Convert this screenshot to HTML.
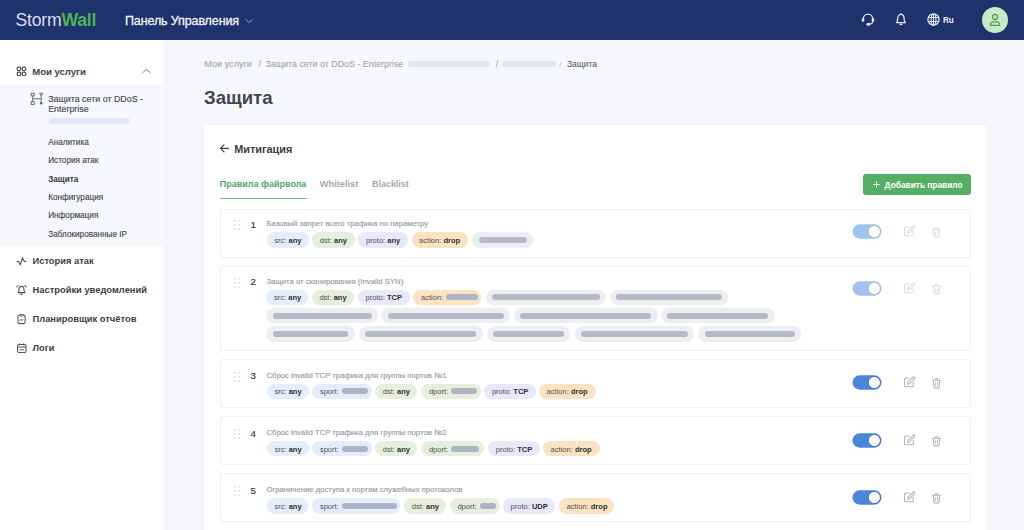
<!DOCTYPE html>
<html lang="ru"><head><meta charset="utf-8"><title>StormWall — Защита</title>
<style>
html,body{margin:0;padding:0;width:1024px;height:530px;overflow:hidden;background:#f5f6fa;}
body{position:relative;font-family:"Liberation Sans", sans-serif;}
.t{position:absolute;white-space:nowrap;line-height:1;}
.t b{font-weight:700;}
.r{position:absolute;}
.s{position:absolute;overflow:visible;}
</style></head><body>
<div class="r" style="left:0.00px;top:0.00px;width:1024.00px;height:40.00px;background:#1e336c;border-radius:0px;"></div>
<div class="t" style="left:15.50px;top:11.70px;font-size:17.6px;font-weight:400;color:#333;letter-spacing:-0.2px;"><span style="font-weight:400;color:#d9dfee">Storm</span><span style="font-weight:700;color:#4db355">Wall</span></div>
<div class="t" style="left:125.00px;top:15.25px;font-size:12.5px;font-weight:400;color:#f2f4fa;letter-spacing:-0.12px;-webkit-text-stroke:0.3px #f2f4fa;">Панель Управления</div>
<svg class="s" style="left:244px;top:17px" width="10" height="8" viewBox="0 0 10 8"><path d="M1.6 2.4 L5 5.6 L8.4 2.4" fill="none" stroke="#8f9bbd" stroke-width="1" stroke-linecap="round" stroke-linejoin="round"/></svg>
<svg class="s" style="left:860px;top:12px" width="16" height="16" viewBox="0 0 16 16">
<path d="M3.4 8.2 V6.8 A4.6 4.6 0 0 1 12.6 6.8 V8.2" fill="none" stroke="#e3e8f3" stroke-width="1.3"/>
<ellipse cx="3" cy="7.9" rx="1.35" ry="1.9" fill="#e3e8f3"/>
<ellipse cx="13" cy="7.9" rx="1.35" ry="1.9" fill="#e3e8f3"/>
<path d="M12.8 9.5 Q12.6 11.8 9.6 12.2" fill="none" stroke="#e3e8f3" stroke-width="1.2"/>
<ellipse cx="8.4" cy="12.3" rx="2" ry="1.5" fill="#e3e8f3"/>
</svg>
<svg class="s" style="left:894px;top:12px" width="14" height="15" viewBox="0 0 14 15">
<path d="M2.5 10.6 C3.5 9.5 3.7 8.6 3.7 6.6 C3.7 4.2 5.1 2.4 6.9 2.4 C8.7 2.4 10.1 4.2 10.1 6.6 C10.1 8.6 10.3 9.5 11.3 10.6 Z" fill="none" stroke="#e3e8f3" stroke-width="1.3" stroke-linejoin="round"/>
<path d="M5.6 11.6 Q6.9 13.6 8.2 11.6" fill="none" stroke="#e3e8f3" stroke-width="1.2"/>
<line x1="6.9" y1="1.3" x2="6.9" y2="2.4" stroke="#e3e8f3" stroke-width="1.1"/>
</svg>
<svg class="s" style="left:926px;top:12px" width="15" height="15" viewBox="0 0 15 15">
<circle cx="7.5" cy="7.5" r="5.6" fill="none" stroke="#e8ecf6" stroke-width="1.2"/>
<ellipse cx="7.5" cy="7.5" rx="2.4" ry="5.6" fill="none" stroke="#e8ecf6" stroke-width="1.05"/>
<line x1="2" y1="5.6" x2="13" y2="5.6" stroke="#e8ecf6" stroke-width="1.05"/>
<line x1="2" y1="9.4" x2="13" y2="9.4" stroke="#e8ecf6" stroke-width="1.05"/>
<line x1="7.5" y1="1.9" x2="7.5" y2="13.1" stroke="#e8ecf6" stroke-width="1.05"/>
</svg>
<div class="t" style="left:943.40px;top:15.45px;font-size:9.5px;font-weight:700;color:#eef1f8;letter-spacing:-0.3px;transform:scaleX(0.86);transform-origin:0 0;">Ru</div>
<svg class="s" style="left:982px;top:7px" width="26" height="26" viewBox="0 0 26 26">
<circle cx="13" cy="13" r="13" fill="#c5ebc6"/>
<circle cx="13" cy="9.9" r="2.5" fill="none" stroke="#4f9b57" stroke-width="1.15"/>
<path d="M8.4 18.4 V17.6 C8.4 15.6 10.1 14.6 13 14.6 C15.9 14.6 17.6 15.6 17.6 17.6 V18.4 Z" fill="none" stroke="#4f9b57" stroke-width="1.15" stroke-linejoin="round"/>
</svg>
<div class="r" style="left:0.00px;top:40.00px;width:167.00px;height:490.00px;background:#ffffff;border-radius:0px;"></div>
<div class="r" style="left:160.00px;top:40.00px;width:8.00px;height:490.00px;background:linear-gradient(90deg, rgba(240,242,247,0) 0%, #f1f2f6 100%);border-radius:0px;"></div>
<div class="r" style="left:0.00px;top:85.20px;width:167.00px;height:160.40px;background:#f6f7fb;border-radius:0px;"></div>
<svg class="s" style="left:16px;top:65.5px" width="11" height="11" viewBox="0 0 11 11">
<rect x="1.3" y="1.1" width="3.4" height="3.4" rx="1" fill="none" stroke="#4a4e56" stroke-width="1.2"/>
<rect x="6.3" y="1.1" width="3.4" height="3.4" rx="1" fill="none" stroke="#4a4e56" stroke-width="1.2"/>
<rect x="1.3" y="6.1" width="3.4" height="3.4" rx="1" fill="none" stroke="#4a4e56" stroke-width="1.2"/>
<rect x="6.3" y="6.1" width="3.4" height="3.4" rx="1" fill="none" stroke="#4a4e56" stroke-width="1.2"/>
</svg>
<div class="t" style="left:32.30px;top:66.60px;font-size:9.6px;font-weight:700;color:#3b3f47;letter-spacing:-0.06px;">Мои услуги</div>
<svg class="s" style="left:141px;top:67px" width="11" height="8" viewBox="0 0 11 8"><path d="M1.8 5.6 L5.5 2.3 L9.2 5.6" fill="none" stroke="#7a7e86" stroke-width="1" stroke-linecap="round" stroke-linejoin="round"/></svg>
<svg class="s" style="left:30px;top:92px" width="14" height="14" viewBox="0 0 14 14">
<rect x="1.2" y="1.3" width="3" height="2.6" fill="none" stroke="#6a6e76" stroke-width="1"/>
<path d="M9.6 1.3 H12.8 L11.2 4 Z" fill="none" stroke="#6a6e76" stroke-width="1" stroke-linejoin="round"/>
<rect x="1.2" y="9.6" width="3" height="2.8" fill="none" stroke="#6a6e76" stroke-width="1"/>
<circle cx="11.2" cy="11" r="1.5" fill="#6a6e76"/>
<line x1="2.7" y1="3.9" x2="2.7" y2="9.6" stroke="#6a6e76" stroke-width="1"/>
<line x1="11.2" y1="4" x2="11.2" y2="9.5" stroke="#6a6e76" stroke-width="1"/>
<line x1="2.7" y1="6.8" x2="11.2" y2="6.8" stroke="#6a6e76" stroke-width="1"/>
</svg>
<div class="t" style="left:48.20px;top:94.95px;font-size:8.9px;font-weight:400;color:#474b53;letter-spacing:0px;-webkit-text-stroke:0.15px #474b53;">Защита сети от DDoS -</div>
<div class="t" style="left:48.20px;top:105.25px;font-size:8.9px;font-weight:400;color:#474b53;letter-spacing:0px;-webkit-text-stroke:0.15px #474b53;">Enterprise</div>
<div class="r" style="left:49.20px;top:118.20px;width:81.20px;height:5.80px;background:#e1e7f4;border-radius:3px;"></div>
<div class="t" style="left:48.20px;top:138.80px;font-size:8.2px;font-weight:400;color:#464a51;letter-spacing:0px;-webkit-text-stroke:0.15px #464a51;">Аналитика</div>
<div class="t" style="left:48.20px;top:157.30px;font-size:8.2px;font-weight:400;color:#464a51;letter-spacing:0px;-webkit-text-stroke:0.15px #464a51;">История атак</div>
<div class="t" style="left:48.20px;top:175.80px;font-size:8.2px;font-weight:700;color:#33373d;letter-spacing:0px;">Защита</div>
<div class="t" style="left:48.20px;top:194.10px;font-size:8.2px;font-weight:400;color:#464a51;letter-spacing:0px;-webkit-text-stroke:0.15px #464a51;">Конфигурация</div>
<div class="t" style="left:48.20px;top:212.40px;font-size:8.2px;font-weight:400;color:#464a51;letter-spacing:0px;-webkit-text-stroke:0.15px #464a51;">Информация</div>
<div class="t" style="left:48.20px;top:230.70px;font-size:8.2px;font-weight:400;color:#464a51;letter-spacing:0px;-webkit-text-stroke:0.15px #464a51;">Заблокированные IP</div>
<div class="t" style="left:32.50px;top:257.22px;font-size:9.35px;font-weight:700;color:#3b3f47;letter-spacing:0px;">История атак</div>
<div class="t" style="left:32.50px;top:286.22px;font-size:9.35px;font-weight:700;color:#3b3f47;letter-spacing:0px;">Настройки уведомлений</div>
<div class="t" style="left:32.50px;top:315.32px;font-size:9.35px;font-weight:700;color:#3b3f47;letter-spacing:0px;">Планировщик отчётов</div>
<div class="t" style="left:32.50px;top:344.02px;font-size:9.35px;font-weight:700;color:#3b3f47;letter-spacing:0px;">Логи</div>
<svg class="s" style="left:15px;top:255px" width="13" height="12" viewBox="0 0 13 12"><path d="M1.9 6.5 H3.7 L5.2 9.9 L7.5 2.7 L9.1 6.4 H10.8" fill="none" stroke="#50545c" stroke-width="1.1" stroke-linecap="round" stroke-linejoin="round"/></svg>
<svg class="s" style="left:15px;top:284px" width="13" height="12" viewBox="0 0 13 12">
<path d="M3 8.6 C3.9 7.7 4 7 4 5.4 C4 3.6 5.1 2.4 6.5 2.4 C7.9 2.4 9 3.6 9 5.4 C9 7 9.1 7.7 10 8.6 Z" fill="none" stroke="#50545c" stroke-width="1.1" stroke-linejoin="round"/>
<path d="M5.5 9.6 Q6.5 11.2 7.5 9.6" fill="none" stroke="#50545c" stroke-width="1.1"/>
<path d="M1.8 3 L3.1 1.6 M11.2 3 L9.9 1.6" fill="none" stroke="#50545c" stroke-width="1.1" stroke-linecap="round"/>
</svg>
<svg class="s" style="left:16px;top:313px" width="11" height="12" viewBox="0 0 11 12">
<rect x="1.9" y="2.1" width="7.2" height="8.5" rx="1.5" fill="none" stroke="#50545c" stroke-width="1.05"/>
<rect x="3.8" y="1.4" width="3.4" height="1.6" rx="0.7" fill="#fff" stroke="#50545c" stroke-width="0.95"/>
<path d="M3.6 8.3 L4.8 6.2 L6 7.6 L7.4 5.8" fill="none" stroke="#50545c" stroke-width="0.8"/>
</svg>
<svg class="s" style="left:16px;top:342px" width="12" height="12" viewBox="0 0 12 12">
<rect x="1.6" y="2.4" width="8.4" height="8.1" rx="1.5" fill="none" stroke="#50545c" stroke-width="1.05"/>
<line x1="1.6" y1="5" x2="10" y2="5" stroke="#50545c" stroke-width="1"/>
<line x1="3.8" y1="1.3" x2="3.8" y2="3.3" stroke="#50545c" stroke-width="1"/>
<line x1="7.8" y1="1.3" x2="7.8" y2="3.3" stroke="#50545c" stroke-width="1"/>
<line x1="4.2" y1="7.7" x2="7.4" y2="7.7" stroke="#50545c" stroke-width="1.1" stroke-linecap="round"/>
</svg>
<div class="r" style="left:168.00px;top:40.00px;width:856.00px;height:490.00px;background:#f6f7fb;border-radius:0px;"></div>
<div class="t" style="left:204.30px;top:59.75px;font-size:9.1px;font-weight:400;color:#979ba3;letter-spacing:0px;">Мои услуги</div>
<div class="t" style="left:258.60px;top:59.85px;font-size:8.9px;font-weight:400;color:#979ba3;letter-spacing:0px;">/</div>
<div class="t" style="left:265.50px;top:59.85px;font-size:8.9px;font-weight:400;color:#979ba3;letter-spacing:0px;">Защита сети от DDoS - Enterprise</div>
<div class="r" style="left:407.50px;top:60.80px;width:82.70px;height:6.20px;background:#e1e6f0;border-radius:3px;"></div>
<div class="t" style="left:495.80px;top:59.85px;font-size:8.9px;font-weight:400;color:#979ba3;letter-spacing:0px;">/</div>
<div class="r" style="left:502.00px;top:60.80px;width:53.80px;height:6.20px;background:#e1e6f0;border-radius:3px;"></div>
<div class="t" style="left:559.20px;top:60.80px;font-size:7px;font-weight:400;color:#b0b4bb;letter-spacing:0px;">/</div>
<div class="t" style="left:566.90px;top:60.05px;font-size:8.5px;font-weight:400;color:#50545c;letter-spacing:0px;">Защита</div>
<div class="t" style="left:204.00px;top:88.70px;font-size:18.6px;font-weight:700;color:#40454f;letter-spacing:0px;">Защита</div>
<div class="r" style="left:204.00px;top:124.50px;width:783.00px;height:420.50px;background:#ffffff;border-radius:4px;box-shadow:0 0 3px rgba(20,30,60,0.04);"></div>
<svg class="s" style="left:219px;top:143px" width="11" height="11" viewBox="0 0 11 11"><path d="M9.5 5.3 H1.5 M5 1.8 L1.5 5.3 L5 8.8" fill="none" stroke="#3a3e46" stroke-width="1.2" stroke-linecap="round" stroke-linejoin="round"/></svg>
<div class="t" style="left:234.20px;top:143.55px;font-size:10.9px;font-weight:700;color:#3a3e46;letter-spacing:0px;">Митигация</div>
<div class="t" style="left:219.80px;top:180.20px;font-size:9.0px;font-weight:700;color:#4fa765;letter-spacing:0px;">Правила файрвола</div>
<div class="t" style="left:319.80px;top:180.07px;font-size:9.25px;font-weight:700;color:#a5a9b0;letter-spacing:0px;">Whitelist</div>
<div class="t" style="left:372.00px;top:180.22px;font-size:8.95px;font-weight:700;color:#a5a9b0;letter-spacing:0px;">Blacklist</div>
<div class="r" style="left:220.00px;top:197.50px;width:86.50px;height:1.60px;background:#74bb84;border-radius:1px;"></div>
<div class="r" style="left:862.80px;top:173.90px;width:108.50px;height:20.70px;background:#55ae64;border-radius:3px;"></div>
<svg class="s" style="left:871.5px;top:180px" width="9" height="9" viewBox="0 0 9 9"><path d="M4.5 1.6 V7.4 M1.6 4.5 H7.4" fill="none" stroke="#f4fbf5" stroke-width="1" stroke-linecap="round"/></svg>
<div class="t" style="left:884.60px;top:180.92px;font-size:8.35px;font-weight:700;color:#ffffff;letter-spacing:0px;">Добавить правило</div>
<div class="r" style="left:220.20px;top:208.60px;width:750.80px;height:49.00px;background:#ffffff;border-radius:3px;box-shadow:inset 0 0 0 1px #eff0f4, 0 0 1px rgba(0,0,0,0.02);"></div>
<svg class="s" style="left:232px;top:218.10px" width="10" height="14" viewBox="0 0 10 14"><g fill="#e2e3e6"><circle cx="2.9" cy="2.7" r="1"/><circle cx="7.1" cy="2.7" r="1"/><circle cx="2.9" cy="6.8" r="1"/><circle cx="7.1" cy="6.8" r="1"/><circle cx="2.9" cy="10.9" r="1"/><circle cx="7.1" cy="10.9" r="1"/></g></svg>
<div class="t" style="left:250.60px;top:219.90px;font-size:9.8px;font-weight:400;color:#2a2e35;letter-spacing:0px;-webkit-text-stroke:0.1px #2a2e35;">1</div>
<div class="t" style="left:266.40px;top:220.24px;font-size:7.72px;font-weight:400;color:#979ba2;letter-spacing:0px;-webkit-text-stroke:0.15px #979ba2;">Базовый запрет всего трафика по параметру</div>
<svg class="s" style="left:851.5px;top:224.00px" width="30" height="15" viewBox="0 0 30 15"><rect x="0.5" y="0.3" width="29" height="14.4" rx="7.2" fill="#9fc3ee"/><circle cx="22.3" cy="7.5" r="6.1" fill="#fff" stroke="#a8b8cf" stroke-width="1"/></svg>
<svg class="s" style="left:903px;top:224.90px" width="13" height="12" viewBox="0 0 13 12">
<path d="M6.5 2 H2.6 Q1.5 2 1.5 3.1 V9.7 Q1.5 10.8 2.6 10.8 H9.2 Q10.3 10.8 10.3 9.7 V6" fill="none" stroke="#dcdcdf" stroke-width="1.1"/>
<path d="M4.6 8.2 L4.9 6.4 L10.2 1.1 Q10.9 0.6 11.6 1.3 Q12.2 2 11.6 2.7 L6.4 7.9 Z" fill="none" stroke="#dcdcdf" stroke-width="1.1" stroke-linejoin="round"/>
</svg>
<svg class="s" style="left:930.5px;top:225.80px" width="11" height="12" viewBox="0 0 11 12">
<path d="M1.4 3.3 H9.6" stroke="#dcdcdf" stroke-width="1.1" stroke-linecap="round"/>
<path d="M4 3.3 V2.2 Q4 1.5 4.7 1.5 H6.3 Q7 1.5 7 2.2 V3.3" fill="none" stroke="#dcdcdf" stroke-width="1"/>
<path d="M2.4 3.3 L2.9 10 Q3 10.9 3.9 10.9 H7.1 Q8 10.9 8.1 10 L8.6 3.3" fill="none" stroke="#dcdcdf" stroke-width="1.1"/>
<path d="M4.5 5.3 V9 M6.5 5.3 V9" stroke="#dcdcdf" stroke-width="0.9"/>
</svg>
<div class="r" style="left:220.20px;top:265.50px;width:750.80px;height:85.50px;background:#ffffff;border-radius:3px;box-shadow:inset 0 0 0 1px #eff0f4, 0 0 1px rgba(0,0,0,0.02);"></div>
<svg class="s" style="left:232px;top:275.50px" width="10" height="14" viewBox="0 0 10 14"><g fill="#e2e3e6"><circle cx="2.9" cy="2.7" r="1"/><circle cx="7.1" cy="2.7" r="1"/><circle cx="2.9" cy="6.8" r="1"/><circle cx="7.1" cy="6.8" r="1"/><circle cx="2.9" cy="10.9" r="1"/><circle cx="7.1" cy="10.9" r="1"/></g></svg>
<div class="t" style="left:250.60px;top:277.30px;font-size:9.8px;font-weight:400;color:#2a2e35;letter-spacing:0px;-webkit-text-stroke:0.1px #2a2e35;">2</div>
<div class="t" style="left:266.40px;top:277.64px;font-size:7.72px;font-weight:400;color:#979ba2;letter-spacing:0px;-webkit-text-stroke:0.15px #979ba2;">Защита от сканирования (Invalid SYN)</div>
<svg class="s" style="left:851.5px;top:281.40px" width="30" height="15" viewBox="0 0 30 15"><rect x="0.5" y="0.3" width="29" height="14.4" rx="7.2" fill="#9fc3ee"/><circle cx="22.3" cy="7.5" r="6.1" fill="#fff" stroke="#a8b8cf" stroke-width="1"/></svg>
<svg class="s" style="left:903px;top:282.30px" width="13" height="12" viewBox="0 0 13 12">
<path d="M6.5 2 H2.6 Q1.5 2 1.5 3.1 V9.7 Q1.5 10.8 2.6 10.8 H9.2 Q10.3 10.8 10.3 9.7 V6" fill="none" stroke="#dcdcdf" stroke-width="1.1"/>
<path d="M4.6 8.2 L4.9 6.4 L10.2 1.1 Q10.9 0.6 11.6 1.3 Q12.2 2 11.6 2.7 L6.4 7.9 Z" fill="none" stroke="#dcdcdf" stroke-width="1.1" stroke-linejoin="round"/>
</svg>
<svg class="s" style="left:930.5px;top:283.20px" width="11" height="12" viewBox="0 0 11 12">
<path d="M1.4 3.3 H9.6" stroke="#dcdcdf" stroke-width="1.1" stroke-linecap="round"/>
<path d="M4 3.3 V2.2 Q4 1.5 4.7 1.5 H6.3 Q7 1.5 7 2.2 V3.3" fill="none" stroke="#dcdcdf" stroke-width="1"/>
<path d="M2.4 3.3 L2.9 10 Q3 10.9 3.9 10.9 H7.1 Q8 10.9 8.1 10 L8.6 3.3" fill="none" stroke="#dcdcdf" stroke-width="1.1"/>
<path d="M4.5 5.3 V9 M6.5 5.3 V9" stroke="#dcdcdf" stroke-width="0.9"/>
</svg>
<div class="r" style="left:220.20px;top:359.20px;width:750.80px;height:49.00px;background:#ffffff;border-radius:3px;box-shadow:inset 0 0 0 1px #eff0f4, 0 0 1px rgba(0,0,0,0.02);"></div>
<svg class="s" style="left:232px;top:369.50px" width="10" height="14" viewBox="0 0 10 14"><g fill="#e2e3e6"><circle cx="2.9" cy="2.7" r="1"/><circle cx="7.1" cy="2.7" r="1"/><circle cx="2.9" cy="6.8" r="1"/><circle cx="7.1" cy="6.8" r="1"/><circle cx="2.9" cy="10.9" r="1"/><circle cx="7.1" cy="10.9" r="1"/></g></svg>
<div class="t" style="left:250.60px;top:371.30px;font-size:9.8px;font-weight:400;color:#2a2e35;letter-spacing:0px;-webkit-text-stroke:0.1px #2a2e35;">3</div>
<div class="t" style="left:266.40px;top:371.64px;font-size:7.72px;font-weight:400;color:#979ba2;letter-spacing:0px;-webkit-text-stroke:0.15px #979ba2;">Сброс invalid TCP трафика для группы портов №1</div>
<svg class="s" style="left:851.5px;top:375.40px" width="30" height="15" viewBox="0 0 30 15"><rect x="0.5" y="0.3" width="29" height="14.4" rx="7.2" fill="#4a87da"/><circle cx="22.3" cy="7.5" r="6.1" fill="#fff" stroke="#3c6fb5" stroke-width="1"/></svg>
<svg class="s" style="left:903px;top:376.30px" width="13" height="12" viewBox="0 0 13 12">
<path d="M6.5 2 H2.6 Q1.5 2 1.5 3.1 V9.7 Q1.5 10.8 2.6 10.8 H9.2 Q10.3 10.8 10.3 9.7 V6" fill="none" stroke="#b3b4b8" stroke-width="1.1"/>
<path d="M4.6 8.2 L4.9 6.4 L10.2 1.1 Q10.9 0.6 11.6 1.3 Q12.2 2 11.6 2.7 L6.4 7.9 Z" fill="none" stroke="#b3b4b8" stroke-width="1.1" stroke-linejoin="round"/>
</svg>
<svg class="s" style="left:930.5px;top:377.20px" width="11" height="12" viewBox="0 0 11 12">
<path d="M1.4 3.3 H9.6" stroke="#b3b4b8" stroke-width="1.1" stroke-linecap="round"/>
<path d="M4 3.3 V2.2 Q4 1.5 4.7 1.5 H6.3 Q7 1.5 7 2.2 V3.3" fill="none" stroke="#b3b4b8" stroke-width="1"/>
<path d="M2.4 3.3 L2.9 10 Q3 10.9 3.9 10.9 H7.1 Q8 10.9 8.1 10 L8.6 3.3" fill="none" stroke="#b3b4b8" stroke-width="1.1"/>
<path d="M4.5 5.3 V9 M6.5 5.3 V9" stroke="#b3b4b8" stroke-width="0.9"/>
</svg>
<div class="r" style="left:220.20px;top:415.70px;width:750.80px;height:49.00px;background:#ffffff;border-radius:3px;box-shadow:inset 0 0 0 1px #eff0f4, 0 0 1px rgba(0,0,0,0.02);"></div>
<svg class="s" style="left:232px;top:426.80px" width="10" height="14" viewBox="0 0 10 14"><g fill="#e2e3e6"><circle cx="2.9" cy="2.7" r="1"/><circle cx="7.1" cy="2.7" r="1"/><circle cx="2.9" cy="6.8" r="1"/><circle cx="7.1" cy="6.8" r="1"/><circle cx="2.9" cy="10.9" r="1"/><circle cx="7.1" cy="10.9" r="1"/></g></svg>
<div class="t" style="left:250.60px;top:428.60px;font-size:9.8px;font-weight:400;color:#2a2e35;letter-spacing:0px;-webkit-text-stroke:0.1px #2a2e35;">4</div>
<div class="t" style="left:266.40px;top:428.94px;font-size:7.72px;font-weight:400;color:#979ba2;letter-spacing:0px;-webkit-text-stroke:0.15px #979ba2;">Сброс invalid TCP трафика для группы портов №2</div>
<svg class="s" style="left:851.5px;top:432.70px" width="30" height="15" viewBox="0 0 30 15"><rect x="0.5" y="0.3" width="29" height="14.4" rx="7.2" fill="#4a87da"/><circle cx="22.3" cy="7.5" r="6.1" fill="#fff" stroke="#3c6fb5" stroke-width="1"/></svg>
<svg class="s" style="left:903px;top:433.60px" width="13" height="12" viewBox="0 0 13 12">
<path d="M6.5 2 H2.6 Q1.5 2 1.5 3.1 V9.7 Q1.5 10.8 2.6 10.8 H9.2 Q10.3 10.8 10.3 9.7 V6" fill="none" stroke="#b3b4b8" stroke-width="1.1"/>
<path d="M4.6 8.2 L4.9 6.4 L10.2 1.1 Q10.9 0.6 11.6 1.3 Q12.2 2 11.6 2.7 L6.4 7.9 Z" fill="none" stroke="#b3b4b8" stroke-width="1.1" stroke-linejoin="round"/>
</svg>
<svg class="s" style="left:930.5px;top:434.50px" width="11" height="12" viewBox="0 0 11 12">
<path d="M1.4 3.3 H9.6" stroke="#b3b4b8" stroke-width="1.1" stroke-linecap="round"/>
<path d="M4 3.3 V2.2 Q4 1.5 4.7 1.5 H6.3 Q7 1.5 7 2.2 V3.3" fill="none" stroke="#b3b4b8" stroke-width="1"/>
<path d="M2.4 3.3 L2.9 10 Q3 10.9 3.9 10.9 H7.1 Q8 10.9 8.1 10 L8.6 3.3" fill="none" stroke="#b3b4b8" stroke-width="1.1"/>
<path d="M4.5 5.3 V9 M6.5 5.3 V9" stroke="#b3b4b8" stroke-width="0.9"/>
</svg>
<div class="r" style="left:220.20px;top:472.60px;width:750.80px;height:49.00px;background:#ffffff;border-radius:3px;box-shadow:inset 0 0 0 1px #eff0f4, 0 0 1px rgba(0,0,0,0.02);"></div>
<svg class="s" style="left:232px;top:484.10px" width="10" height="14" viewBox="0 0 10 14"><g fill="#e2e3e6"><circle cx="2.9" cy="2.7" r="1"/><circle cx="7.1" cy="2.7" r="1"/><circle cx="2.9" cy="6.8" r="1"/><circle cx="7.1" cy="6.8" r="1"/><circle cx="2.9" cy="10.9" r="1"/><circle cx="7.1" cy="10.9" r="1"/></g></svg>
<div class="t" style="left:250.60px;top:485.90px;font-size:9.8px;font-weight:400;color:#2a2e35;letter-spacing:0px;-webkit-text-stroke:0.1px #2a2e35;">5</div>
<div class="t" style="left:266.40px;top:486.24px;font-size:7.72px;font-weight:400;color:#979ba2;letter-spacing:0px;-webkit-text-stroke:0.15px #979ba2;">Ограничение доступа к портам служебных протоколов</div>
<svg class="s" style="left:851.5px;top:490.00px" width="30" height="15" viewBox="0 0 30 15"><rect x="0.5" y="0.3" width="29" height="14.4" rx="7.2" fill="#4a87da"/><circle cx="22.3" cy="7.5" r="6.1" fill="#fff" stroke="#3c6fb5" stroke-width="1"/></svg>
<svg class="s" style="left:903px;top:490.90px" width="13" height="12" viewBox="0 0 13 12">
<path d="M6.5 2 H2.6 Q1.5 2 1.5 3.1 V9.7 Q1.5 10.8 2.6 10.8 H9.2 Q10.3 10.8 10.3 9.7 V6" fill="none" stroke="#b3b4b8" stroke-width="1.1"/>
<path d="M4.6 8.2 L4.9 6.4 L10.2 1.1 Q10.9 0.6 11.6 1.3 Q12.2 2 11.6 2.7 L6.4 7.9 Z" fill="none" stroke="#b3b4b8" stroke-width="1.1" stroke-linejoin="round"/>
</svg>
<svg class="s" style="left:930.5px;top:491.80px" width="11" height="12" viewBox="0 0 11 12">
<path d="M1.4 3.3 H9.6" stroke="#b3b4b8" stroke-width="1.1" stroke-linecap="round"/>
<path d="M4 3.3 V2.2 Q4 1.5 4.7 1.5 H6.3 Q7 1.5 7 2.2 V3.3" fill="none" stroke="#b3b4b8" stroke-width="1"/>
<path d="M2.4 3.3 L2.9 10 Q3 10.9 3.9 10.9 H7.1 Q8 10.9 8.1 10 L8.6 3.3" fill="none" stroke="#b3b4b8" stroke-width="1.1"/>
<path d="M4.5 5.3 V9 M6.5 5.3 V9" stroke="#b3b4b8" stroke-width="0.9"/>
</svg>
<div class="r" style="left:266.60px;top:232.25px;width:42.40px;height:15.30px;background:#e3eefa;border-radius:8px;"></div>
<div class="t" style="left:274.20px;top:236.88px;font-size:7.55px;font-weight:400;color:#4b5058;letter-spacing:0px;">src: <b style="color:#2c3037">any</b></div>
<div class="r" style="left:312.20px;top:232.25px;width:42.50px;height:15.30px;background:#e4efdc;border-radius:8px;"></div>
<div class="t" style="left:319.80px;top:236.88px;font-size:7.55px;font-weight:400;color:#4b5058;letter-spacing:0px;">dst: <b style="color:#2c3037">any</b></div>
<div class="r" style="left:358.30px;top:232.25px;width:49.60px;height:15.30px;background:#e8e8f8;border-radius:8px;"></div>
<div class="t" style="left:365.90px;top:236.88px;font-size:7.55px;font-weight:400;color:#4b5058;letter-spacing:0px;">proto: <b style="color:#2c3037">any</b></div>
<div class="r" style="left:411.50px;top:232.25px;width:56.90px;height:15.30px;background:#fbe3c1;border-radius:8px;"></div>
<div class="t" style="left:419.10px;top:236.88px;font-size:7.55px;font-weight:400;color:#4b5058;letter-spacing:0px;">action: <b style="color:#2c3037">drop</b></div>
<div class="r" style="left:471.60px;top:232.25px;width:61.20px;height:15.30px;background:#edeef1;border-radius:8px;"></div>
<div class="r" style="left:478.90px;top:236.95px;width:47.70px;height:6.00px;background:#b6bac6;border-radius:3px;"></div>
<div class="r" style="left:266.40px;top:289.65px;width:41.80px;height:15.30px;background:#e3eefa;border-radius:8px;"></div>
<div class="t" style="left:274.00px;top:294.27px;font-size:7.55px;font-weight:400;color:#4b5058;letter-spacing:0px;">src: <b style="color:#2c3037">any</b></div>
<div class="r" style="left:311.80px;top:289.65px;width:42.60px;height:15.30px;background:#e4efdc;border-radius:8px;"></div>
<div class="t" style="left:319.40px;top:294.27px;font-size:7.55px;font-weight:400;color:#4b5058;letter-spacing:0px;">dst: <b style="color:#2c3037">any</b></div>
<div class="r" style="left:358.00px;top:289.65px;width:52.10px;height:15.30px;background:#e8e8f8;border-radius:8px;"></div>
<div class="t" style="left:365.60px;top:294.27px;font-size:7.55px;font-weight:400;color:#4b5058;letter-spacing:0px;">proto: <b style="color:#2c3037">TCP</b></div>
<div class="r" style="left:413.40px;top:289.65px;width:67.50px;height:15.30px;background:#fbe3c1;border-radius:8px;"></div>
<div class="t" style="left:421.00px;top:294.27px;font-size:7.55px;font-weight:400;color:#4b5058;letter-spacing:0px;">action:</div>
<div class="r" style="left:446.00px;top:294.35px;width:32.00px;height:6.00px;background:#aeb4c6;border-radius:3px;"></div>
<div class="r" style="left:485.90px;top:289.65px;width:120.20px;height:15.30px;background:#edeef1;border-radius:8px;"></div>
<div class="r" style="left:492.40px;top:294.35px;width:107.20px;height:6.00px;background:#b6bac6;border-radius:3px;"></div>
<div class="r" style="left:609.50px;top:289.65px;width:118.80px;height:15.30px;background:#edeef1;border-radius:8px;"></div>
<div class="r" style="left:616.00px;top:294.35px;width:105.80px;height:6.00px;background:#b6bac6;border-radius:3px;"></div>
<div class="r" style="left:266.40px;top:308.05px;width:111.80px;height:15.30px;background:#edeef1;border-radius:8px;"></div>
<div class="r" style="left:272.90px;top:312.75px;width:98.80px;height:6.00px;background:#b6bac6;border-radius:3px;"></div>
<div class="r" style="left:381.40px;top:308.05px;width:129.10px;height:15.30px;background:#edeef1;border-radius:8px;"></div>
<div class="r" style="left:387.90px;top:312.75px;width:116.10px;height:6.00px;background:#b6bac6;border-radius:3px;"></div>
<div class="r" style="left:513.80px;top:308.05px;width:143.80px;height:15.30px;background:#edeef1;border-radius:8px;"></div>
<div class="r" style="left:520.30px;top:312.75px;width:130.80px;height:6.00px;background:#b6bac6;border-radius:3px;"></div>
<div class="r" style="left:660.90px;top:308.05px;width:113.90px;height:15.30px;background:#edeef1;border-radius:8px;"></div>
<div class="r" style="left:667.40px;top:312.75px;width:100.90px;height:6.00px;background:#b6bac6;border-radius:3px;"></div>
<div class="r" style="left:266.40px;top:326.45px;width:88.60px;height:15.30px;background:#edeef1;border-radius:8px;"></div>
<div class="r" style="left:272.90px;top:331.15px;width:75.60px;height:6.00px;background:#b6bac6;border-radius:3px;"></div>
<div class="r" style="left:358.60px;top:326.45px;width:124.00px;height:15.30px;background:#edeef1;border-radius:8px;"></div>
<div class="r" style="left:365.10px;top:331.15px;width:111.00px;height:6.00px;background:#b6bac6;border-radius:3px;"></div>
<div class="r" style="left:486.60px;top:326.45px;width:83.70px;height:15.30px;background:#edeef1;border-radius:8px;"></div>
<div class="r" style="left:493.10px;top:331.15px;width:70.70px;height:6.00px;background:#b6bac6;border-radius:3px;"></div>
<div class="r" style="left:574.90px;top:326.45px;width:119.20px;height:15.30px;background:#edeef1;border-radius:8px;"></div>
<div class="r" style="left:581.40px;top:331.15px;width:106.20px;height:6.00px;background:#b6bac6;border-radius:3px;"></div>
<div class="r" style="left:698.40px;top:326.45px;width:103.00px;height:15.30px;background:#edeef1;border-radius:8px;"></div>
<div class="r" style="left:704.90px;top:331.15px;width:90.00px;height:6.00px;background:#b6bac6;border-radius:3px;"></div>
<div class="r" style="left:266.80px;top:383.65px;width:42.00px;height:15.30px;background:#e3eefa;border-radius:8px;"></div>
<div class="t" style="left:274.40px;top:388.27px;font-size:7.55px;font-weight:400;color:#4b5058;letter-spacing:0px;">src: <b style="color:#2c3037">any</b></div>
<div class="r" style="left:312.30px;top:383.65px;width:59.40px;height:15.30px;background:#e3eefa;border-radius:8px;"></div>
<div class="t" style="left:319.90px;top:388.27px;font-size:7.55px;font-weight:400;color:#4b5058;letter-spacing:0px;">sport:</div>
<div class="r" style="left:341.60px;top:388.35px;width:26.20px;height:6.00px;background:#aeb4c6;border-radius:3px;"></div>
<div class="r" style="left:375.20px;top:383.65px;width:42.00px;height:15.30px;background:#e4efdc;border-radius:8px;"></div>
<div class="t" style="left:382.80px;top:388.27px;font-size:7.55px;font-weight:400;color:#4b5058;letter-spacing:0px;">dst: <b style="color:#2c3037">any</b></div>
<div class="r" style="left:421.30px;top:383.65px;width:59.70px;height:15.30px;background:#e4efdc;border-radius:8px;"></div>
<div class="t" style="left:428.90px;top:388.27px;font-size:7.55px;font-weight:400;color:#4b5058;letter-spacing:0px;">dport:</div>
<div class="r" style="left:451.10px;top:388.35px;width:26.00px;height:6.00px;background:#aeb4c6;border-radius:3px;"></div>
<div class="r" style="left:484.30px;top:383.65px;width:51.40px;height:15.30px;background:#e8e8f8;border-radius:8px;"></div>
<div class="t" style="left:491.90px;top:388.27px;font-size:7.55px;font-weight:400;color:#4b5058;letter-spacing:0px;">proto: <b style="color:#2c3037">TCP</b></div>
<div class="r" style="left:539.00px;top:383.65px;width:57.30px;height:15.30px;background:#fbe3c1;border-radius:8px;"></div>
<div class="t" style="left:546.60px;top:388.27px;font-size:7.55px;font-weight:400;color:#4b5058;letter-spacing:0px;">action: <b style="color:#2c3037">drop</b></div>
<div class="r" style="left:266.80px;top:440.95px;width:42.00px;height:15.30px;background:#e3eefa;border-radius:8px;"></div>
<div class="t" style="left:274.40px;top:445.57px;font-size:7.55px;font-weight:400;color:#4b5058;letter-spacing:0px;">src: <b style="color:#2c3037">any</b></div>
<div class="r" style="left:312.30px;top:440.95px;width:59.40px;height:15.30px;background:#e3eefa;border-radius:8px;"></div>
<div class="t" style="left:319.90px;top:445.57px;font-size:7.55px;font-weight:400;color:#4b5058;letter-spacing:0px;">sport:</div>
<div class="r" style="left:341.60px;top:445.65px;width:26.20px;height:6.00px;background:#aeb4c6;border-radius:3px;"></div>
<div class="r" style="left:375.20px;top:440.95px;width:42.00px;height:15.30px;background:#e4efdc;border-radius:8px;"></div>
<div class="t" style="left:382.80px;top:445.57px;font-size:7.55px;font-weight:400;color:#4b5058;letter-spacing:0px;">dst: <b style="color:#2c3037">any</b></div>
<div class="r" style="left:421.30px;top:440.95px;width:63.00px;height:15.30px;background:#e4efdc;border-radius:8px;"></div>
<div class="t" style="left:428.90px;top:445.57px;font-size:7.55px;font-weight:400;color:#4b5058;letter-spacing:0px;">dport:</div>
<div class="r" style="left:451.10px;top:445.65px;width:28.40px;height:6.00px;background:#aeb4c6;border-radius:3px;"></div>
<div class="r" style="left:488.20px;top:440.95px;width:51.40px;height:15.30px;background:#e8e8f8;border-radius:8px;"></div>
<div class="t" style="left:495.80px;top:445.57px;font-size:7.55px;font-weight:400;color:#4b5058;letter-spacing:0px;">proto: <b style="color:#2c3037">TCP</b></div>
<div class="r" style="left:543.00px;top:440.95px;width:56.60px;height:15.30px;background:#fbe3c1;border-radius:8px;"></div>
<div class="t" style="left:550.60px;top:445.57px;font-size:7.55px;font-weight:400;color:#4b5058;letter-spacing:0px;">action: <b style="color:#2c3037">drop</b></div>
<div class="r" style="left:266.80px;top:498.25px;width:41.60px;height:15.30px;background:#e3eefa;border-radius:8px;"></div>
<div class="t" style="left:274.40px;top:502.88px;font-size:7.55px;font-weight:400;color:#4b5058;letter-spacing:0px;">src: <b style="color:#2c3037">any</b></div>
<div class="r" style="left:312.30px;top:498.25px;width:87.90px;height:15.30px;background:#e3eefa;border-radius:8px;"></div>
<div class="t" style="left:319.90px;top:502.88px;font-size:7.55px;font-weight:400;color:#4b5058;letter-spacing:0px;">sport:</div>
<div class="r" style="left:342.00px;top:502.95px;width:54.70px;height:6.00px;background:#aeb4c6;border-radius:3px;"></div>
<div class="r" style="left:404.10px;top:498.25px;width:42.40px;height:15.30px;background:#e4efdc;border-radius:8px;"></div>
<div class="t" style="left:411.70px;top:502.88px;font-size:7.55px;font-weight:400;color:#4b5058;letter-spacing:0px;">dst: <b style="color:#2c3037">any</b></div>
<div class="r" style="left:449.80px;top:498.25px;width:49.80px;height:15.30px;background:#e4efdc;border-radius:8px;"></div>
<div class="t" style="left:457.40px;top:502.88px;font-size:7.55px;font-weight:400;color:#4b5058;letter-spacing:0px;">dport:</div>
<div class="r" style="left:480.00px;top:502.95px;width:15.70px;height:6.00px;background:#aeb4c6;border-radius:3px;"></div>
<div class="r" style="left:502.90px;top:498.25px;width:52.30px;height:15.30px;background:#e8e8f8;border-radius:8px;"></div>
<div class="t" style="left:510.50px;top:502.88px;font-size:7.55px;font-weight:400;color:#4b5058;letter-spacing:0px;">proto: <b style="color:#2c3037">UDP</b></div>
<div class="r" style="left:558.80px;top:498.25px;width:55.00px;height:15.30px;background:#fbe3c1;border-radius:8px;"></div>
<div class="t" style="left:566.40px;top:502.88px;font-size:7.55px;font-weight:400;color:#4b5058;letter-spacing:0px;">action: <b style="color:#2c3037">drop</b></div>
</body></html>
